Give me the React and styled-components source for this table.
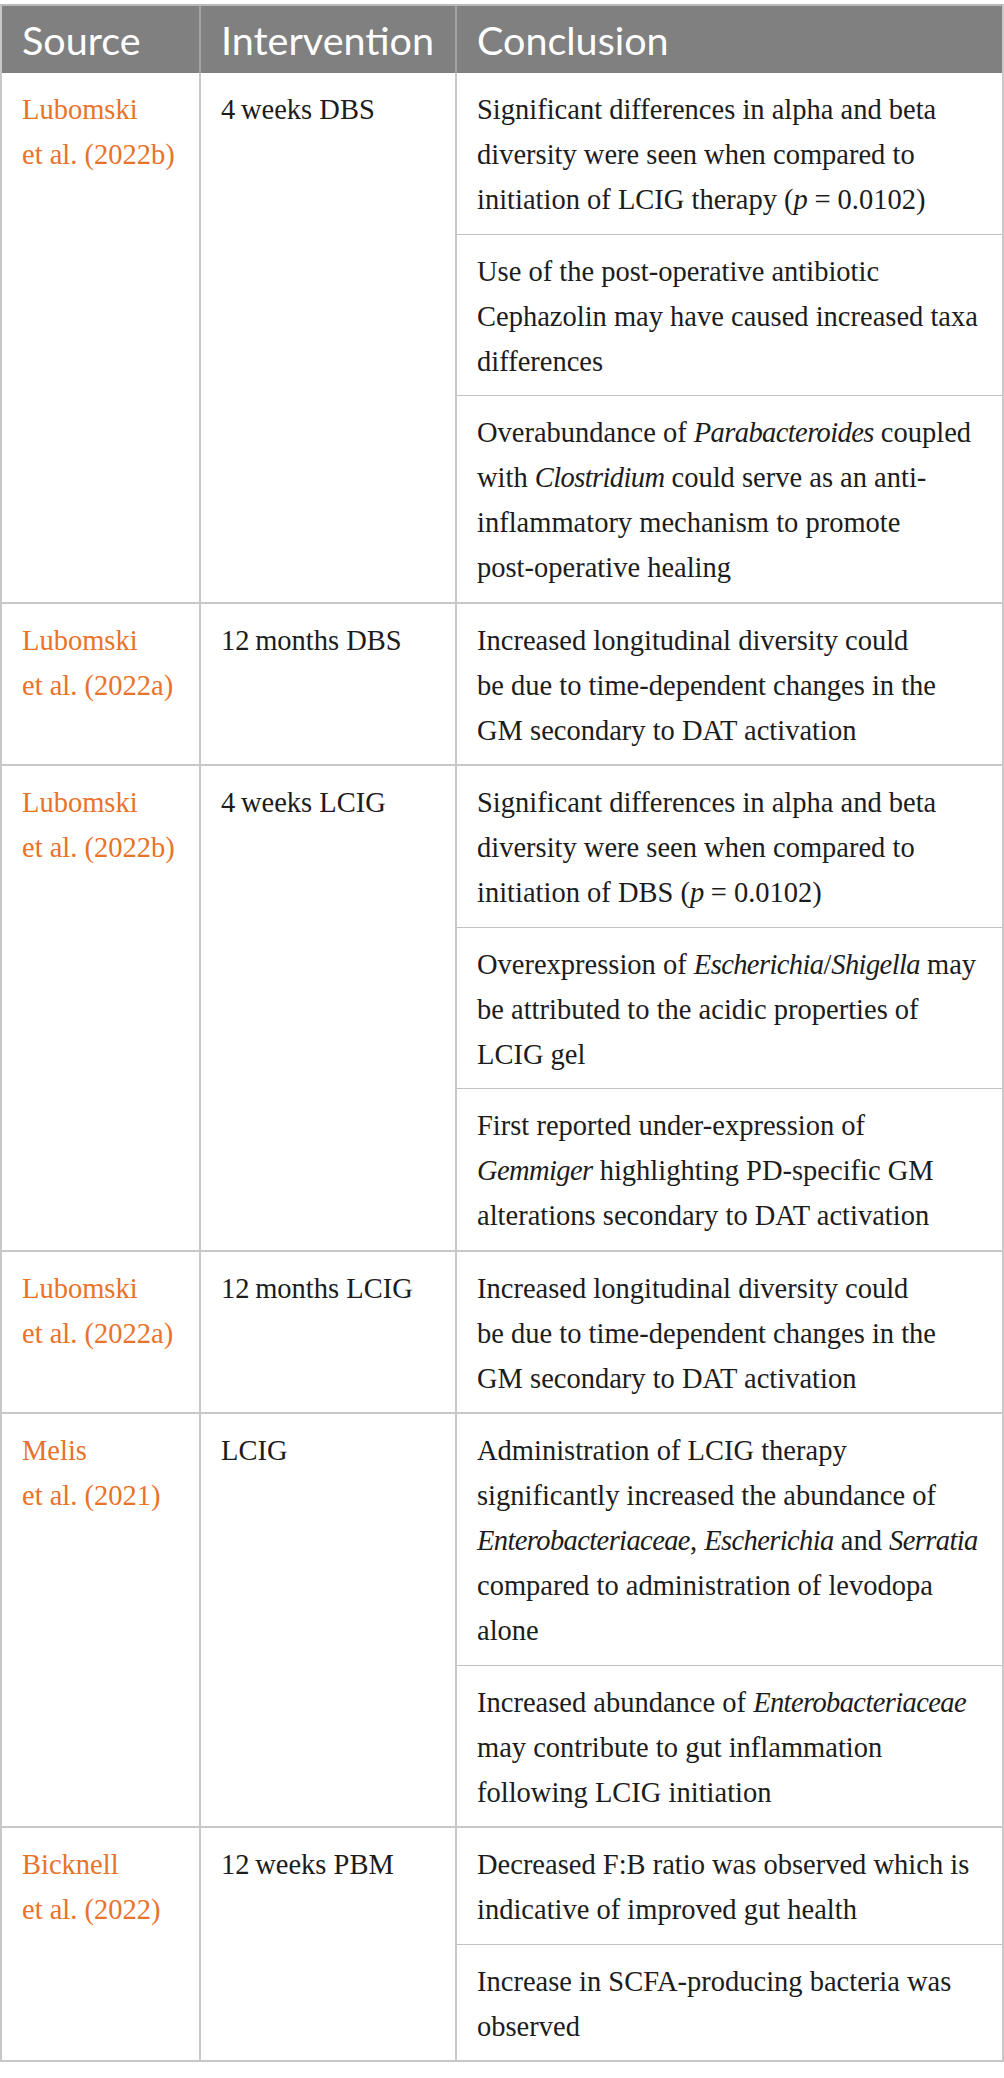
import React from 'react';
import styled, { createGlobalStyle } from 'styled-components';

const GlobalStyle = createGlobalStyle`
  *, *::before, *::after { box-sizing: border-box; }
  html, body { margin: 0; padding: 0; background: #ffffff; }
  body { font-family: "Liberation Serif", "Times New Roman", serif; }
`;

const COLS = '197px 256px 1fr';
const RULE = '#c8c8c8';

const Page = styled.div`
  padding-top: 4px;
  width: 1004px;
`;

const Table = styled.div`
  width: 1004px;
  border: 2px solid ${RULE};
  border-top-color: #b9b9b9;
`;

const HeaderRow = styled.div`
  display: grid;
  grid-template-columns: ${COLS};
  background: #808080;
  height: 67px;
`;

const HeadCell = styled.div`
  font-family: Lato, "Open Sans", sans-serif;
  font-size: 39.5px;
  font-weight: 400;
  line-height: 67px;
  color: #ffffff;
  padding-left: 20px;
  white-space: nowrap;
  border-left: ${(p) => (p.$first ? 'none' : '2px solid #a4a4a4')};
`;

const Row = styled.div`
  display: grid;
  grid-template-columns: ${COLS};
  border-top: ${(p) => (p.$first ? 'none' : `2px solid ${RULE}`)};
`;

const Cell = styled.div`
  padding: 14px 20px 11.5px;
  font-size: 28.5px;
  line-height: 45px;
  color: #1c1c1c;
  border-left: ${(p) => (p.$first ? 'none' : `2px solid ${RULE}`)};
`;

const SourceText = styled.span`
  display: block;
  color: #e8732a;
`;

const Findings = styled.div`
  display: flex;
  flex-direction: column;
  border-left: 2px solid ${RULE};
`;

const Finding = styled.div`
  padding: 14px 20px 11.5px;
  font-size: 28.5px;
  line-height: 45px;
  color: #1c1c1c;
  & + & {
    border-top: 1px solid #c2c2c2;
  }
`;

const Line = styled.span`
  display: block;
  white-space: nowrap;
`;

const I = styled.i`
  font-style: italic;
  letter-spacing: -0.6px;
`;

const T = '\u2009';

const rows = [
  {
    source: ['Lubomski', 'et al. (2022b)'],
    intervention: `4${T}weeks DBS`,
    findings: [
      [
        'Significant differences in alpha and beta',
        'diversity were seen when compared to',
        <>initiation of LCIG therapy (<I>p</I> = 0.0102)</>,
      ],
      [
        'Use of the post-operative antibiotic',
        'Cephazolin may have caused increased taxa',
        'differences',
      ],
      [
        <>Overabundance of <I>Parabacteroides</I> coupled</>,
        <>with <I>Clostridium</I> could serve as an anti-</>,
        'inflammatory mechanism to promote',
        'post-operative healing',
      ],
    ],
  },
  {
    source: ['Lubomski', 'et al. (2022a)'],
    intervention: `12${T}months DBS`,
    findings: [
      [
        'Increased longitudinal diversity could',
        'be due to time-dependent changes in the',
        'GM secondary to DAT activation',
      ],
    ],
  },
  {
    source: ['Lubomski', 'et al. (2022b)'],
    intervention: `4${T}weeks LCIG`,
    findings: [
      [
        'Significant differences in alpha and beta',
        'diversity were seen when compared to',
        <>initiation of DBS (<I>p</I> = 0.0102)</>,
      ],
      [
        <>Overexpression of <I>Escherichia</I>/<I>Shigella</I> may</>,
        'be attributed to the acidic properties of',
        'LCIG gel',
      ],
      [
        'First reported under-expression of',
        <><I>Gemmiger</I> highlighting PD-specific GM</>,
        'alterations secondary to DAT activation',
      ],
    ],
  },
  {
    source: ['Lubomski', 'et al. (2022a)'],
    intervention: `12${T}months LCIG`,
    findings: [
      [
        'Increased longitudinal diversity could',
        'be due to time-dependent changes in the',
        'GM secondary to DAT activation',
      ],
    ],
  },
  {
    source: ['Melis', 'et al. (2021)'],
    intervention: 'LCIG',
    findings: [
      [
        'Administration of LCIG therapy',
        'significantly increased the abundance of',
        <><I>Enterobacteriaceae</I>, <I>Escherichia</I> and <I>Serratia</I></>,
        'compared to administration of levodopa',
        'alone',
      ],
      [
        <>Increased abundance of <I>Enterobacteriaceae</I></>,
        'may contribute to gut inflammation',
        'following LCIG initiation',
      ],
    ],
  },
  {
    source: ['Bicknell', 'et al. (2022)'],
    intervention: `12${T}weeks PBM`,
    findings: [
      [
        'Decreased F:B ratio was observed which is',
        'indicative of improved gut health',
      ],
      [
        'Increase in SCFA-producing bacteria was',
        'observed',
      ],
    ],
  },
];

export default function App() {
  return (
    <Page>
      <GlobalStyle />
      <Table>
        <HeaderRow>
          <HeadCell $first>Source</HeadCell>
          <HeadCell>Intervention</HeadCell>
          <HeadCell>Conclusion</HeadCell>
        </HeaderRow>
        {rows.map((row, ri) => (
          <Row key={ri} $first={ri === 0}>
            <Cell $first>
              {row.source.map((s, i) => (
                <SourceText key={i}>{s}</SourceText>
              ))}
            </Cell>
            <Cell>
              <Line>{row.intervention}</Line>
            </Cell>
            <Findings>
              {row.findings.map((lines, fi) => (
                <Finding key={fi}>
                  {lines.map((l, li) => (
                    <Line key={li}>{l}</Line>
                  ))}
                </Finding>
              ))}
            </Findings>
          </Row>
        ))}
      </Table>
    </Page>
  );
}
